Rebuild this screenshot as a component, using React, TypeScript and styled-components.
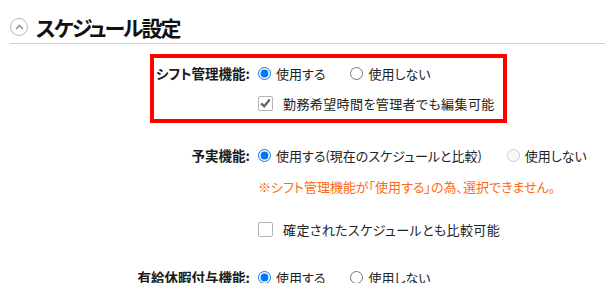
import React from "react";
import styled, { createGlobalStyle } from "styled-components";

const GlobalStyle = createGlobalStyle`
  body {
    margin: 0;
    background: #fff;
    font-family: "Noto Sans CJK JP", "Noto Sans", sans-serif;
    font-size: 13px;
    color: #222;
    font-feature-settings: "palt";
  }
`;

const Page = styled.div`
  width: 605px;
  height: 283px;
  overflow: hidden;
`;

// Section header
const Header = styled.div`
  margin-left: 10px;
  height: 44px;
  box-sizing: border-box;
  padding-top: 10px;
  display: flex;
  align-items: center;
  gap: 8px;
  border-bottom: 1px solid #cfcfcf;
`;
const CollapseButton = styled.span`
  width: 18px;
  height: 18px;
  box-sizing: border-box;
  border: 1px solid #b8b8b8;
  border-radius: 50%;
  display: flex;
  align-items: center;
  justify-content: center;
`;
const Title = styled.h2`
  margin: 0;
  font-size: 21px;
  font-weight: 700;
  color: #111;
  letter-spacing: -2px;
`;

// Setting groups
const Group = styled.div<{ $highlight?: boolean; $top: number }>`
  margin: ${(p) => p.$top}px 0 0 150px;
  width: 357px;
  box-sizing: border-box;
  border: 4px solid ${(p) => (p.$highlight ? "#ff0000" : "transparent")};
  padding-bottom: ${(p) => (p.$highlight ? 1 : 0)}px;
`;
const Row = styled.div<{ $h?: number; $top?: number }>`
  display: flex;
  align-items: center;
  height: ${(p) => p.$h ?? 30}px;
  margin-top: ${(p) => p.$top ?? 0}px;
`;
const Label = styled.div`
  width: 96px;
  flex: none;
  display: flex;
  justify-content: flex-end;
  white-space: nowrap;
  font-size: 13.5px;
  font-weight: 700;
  color: #1a1a1a;
`;
const Controls = styled.div`
  margin-left: 8px;
  display: flex;
  align-items: center;
  gap: 25px;
  white-space: nowrap;
`;
const Option = styled.label`
  display: flex;
  align-items: center;
  gap: 5px;
  color: #222;
`;
const Radio = styled.input.attrs({ type: "radio" })`
  margin: 0;
  width: 13px;
  height: 13px;
  accent-color: #0075ff;
`;
const Note = styled.div`
  margin-left: 104px;
  color: #ff6a14;
  white-space: nowrap;
`;
const CheckItem = styled.label`
  margin-left: 104px;
  display: flex;
  align-items: center;
  gap: 10px;
  white-space: nowrap;
  letter-spacing: 0.4px;
`;
const CheckBox = styled.span`
  width: 15px;
  height: 15px;
  box-sizing: border-box;
  border: 1px solid #b5b5b5;
  border-radius: 2px;
  background: #fff;
  display: flex;
  align-items: center;
  justify-content: center;
`;

function Check({ checked }: { checked?: boolean }) {
  return (
    <CheckBox>
      {checked && (
        <svg width="11" height="10" viewBox="0 0 11 10">
          <path d="M1.2 5.4 L4.2 8.3 L9.8 1.6" fill="none" stroke="#666" strokeWidth="2.3" />
        </svg>
      )}
    </CheckBox>
  );
}

const noop = () => {};

export default function App() {
  return (
    <Page>
      <GlobalStyle />
      <Header>
        <CollapseButton>
          <svg width="9" height="6" viewBox="0 0 9 6">
            <path d="M1 5 L4.5 1.5 L8 5" fill="none" stroke="#888" strokeWidth="1.4" />
          </svg>
        </CollapseButton>
        <Title>スケジュール設定</Title>
      </Header>

      <Group $highlight $top={10}>
        <Row>
          <Label>シフト管理機能:</Label>
          <Controls>
            <Option>
              <Radio name="shift" checked onChange={noop} />
              使用する
            </Option>
            <Option>
              <Radio name="shift" checked={false} onChange={noop} />
              使用しない
            </Option>
          </Controls>
        </Row>
        <Row>
          <CheckItem>
            <Check checked />
            勤務希望時間を管理者でも編集可能
          </CheckItem>
        </Row>
      </Group>

      <Group $top={13}>
        <Row>
          <Label>予実機能:</Label>
          <Controls>
            <Option>
              <Radio name="yojitsu" checked onChange={noop} />
              使用する(現在のスケジュールと比較)
            </Option>
            <Option>
              <Radio name="yojitsu" checked={false} disabled onChange={noop} />
              使用しない
            </Option>
          </Controls>
        </Row>
        <Row $h={32}>
          <Note>※シフト管理機能が「使用する」の為、選択できません。</Note>
        </Row>
        <Row $top={12}>
          <CheckItem>
            <Check />
            確定されたスケジュールとも比較可能
          </CheckItem>
        </Row>
      </Group>

      <Group $top={10}>
        <Row>
          <Label>有給休暇付与機能:</Label>
          <Controls>
            <Option>
              <Radio name="yukyu" checked onChange={noop} />
              使用する
            </Option>
            <Option>
              <Radio name="yukyu" checked={false} onChange={noop} />
              使用しない
            </Option>
          </Controls>
        </Row>
      </Group>
    </Page>
  );
}
